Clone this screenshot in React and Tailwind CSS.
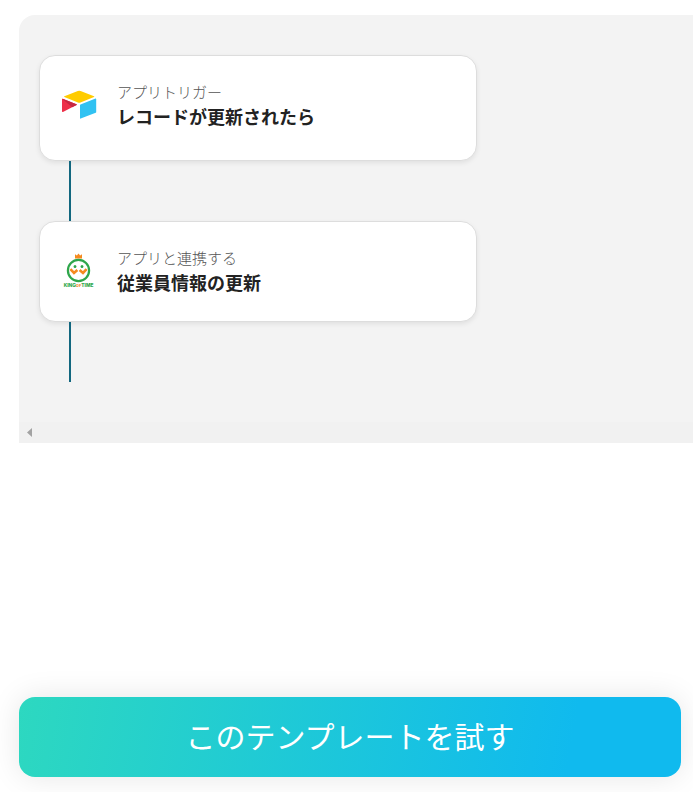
import React from 'react';

const AirtableIcon = () => (
  <svg viewBox="0 0 40 40" className="w-10 h-10 shrink-0" aria-hidden="true">
    <path
      d="M18.8 7 5.4 12.3q-.8.4 0 .8l13.5 5.4q1.3.5 2.6 0L35 13.1q.8-.4 0-.8L21.6 7q-1.4-.5-2.8 0Z"
      fill="#ffcc00"
    />
    <path d="M21 21.2v13q0 .7.7.4l15-5.8q.5-.2.5-.8v-13q0-.7-.7-.4l-15 5.8q-.5.2-.5.8Z" fill="#31c2f2" />
    <path d="m17.6 21-4.5 2.2L4 27.9q-1 .3-1-.6V15.4q0-.8.9-.6l13.6 5.4q.7.4.1.8Z" fill="#ed3049" />
    <path d="m17.6 21-4.5 2.2L3.4 14.9q.3-.2.7 0l13.4 5.3q.7.4.1.8Z" fill="#c62842" />
  </svg>
);

const KingOfTimeIcon = () => (
  <svg viewBox="0 -1 40 40" className="w-10 h-10 shrink-0" aria-hidden="true">
    <path d="M16 3.2 17.9 4.5l1.6-2 1.6 2L23 3.2V7.6h-7Z" fill="#f58a1f" />
    <circle cx="19.5" cy="19.5" r="10.6" fill="#fff" stroke="#2fa64b" strokeWidth="2.2" />
    <ellipse cx="16" cy="15.6" rx="1.4" ry="1.5" fill="#2fa64b" />
    <ellipse cx="23" cy="15.6" rx="1.4" ry="1.5" fill="#2fa64b" />
    <path
      d="m11.4 18.2 3.6 3.8 3.4-3M27.6 18.2l-3.6 3.8-3.4-3"
      fill="none"
      stroke="#f58a1f"
      strokeWidth="2.6"
    />
    <text x="19.5" y="35.6" textAnchor="middle" fontSize="4.8" fontWeight="800" fill="#2fa64b" fontFamily="Inter, sans-serif">
      KING<tspan fill="#f58a1f" fontSize="4">OF</tspan>TIME
    </text>
  </svg>
);

const steps = [
  { id: 'trigger', icon: <AirtableIcon />, label: 'アプリトリガー', title: 'レコードが更新されたら', spacing: 'pb-8' },
  { id: 'action', icon: <KingOfTimeIcon />, label: 'アプリと連携する', title: '従業員情報の更新', spacing: 'pb-[27px]' },
];

const StepCard = ({ icon, label, title, spacing }) => (
  <div
    className={`flex items-center gap-[18px] rounded-2xl border border-[#dddddd] bg-white px-[19px] pt-6 shadow-[0_2px_5px_rgba(0,0,0,0.08)] ${spacing}`}
  >
    {icon}
    <div>
      <p className="text-[15px] leading-6 font-light text-[#555555]">{label}</p>
      <h3 className="text-lg leading-6 font-bold text-[#222222]">{title}</h3>
    </div>
  </div>
);

const App = () => {
  return (
    <main className="flex min-h-screen flex-col overflow-hidden bg-white pt-[15px] pb-[15px] pl-[19px] font-['Noto_Sans_CJK_JP',sans-serif]">
      <section className="overflow-hidden rounded-tl-2xl bg-[#f3f3f3]">
        <ol className="px-5 py-10">
          {steps.map((step) => (
            <li key={step.id} className="max-w-[438px]">
              <StepCard {...step} />
              <div className="ml-[30px] h-[60px] w-0.5 bg-[#12677f]" />
            </li>
          ))}
        </ol>
        <div className="flex h-[21px] items-center bg-[#f1f1f1] pl-2">
          <button type="button" aria-label="左へスクロール">
            <svg viewBox="0 0 5 9" className="h-[9px] w-[5px]" aria-hidden="true">
              <path d="M5 0v9L0 4.5Z" fill="#a3a3a3" />
            </svg>
          </button>
        </div>
      </section>
      <button
        type="button"
        className="mt-auto mr-3 h-20 rounded-2xl bg-[linear-gradient(100deg,#2dd8c0_0%,#10baee_83%)] pb-1 text-[30px] leading-10 text-white shadow-[0_0_30px_rgba(0,0,0,0.1)]"
      >
        このテンプレートを試す
      </button>
    </main>
  );
};

export default App;
